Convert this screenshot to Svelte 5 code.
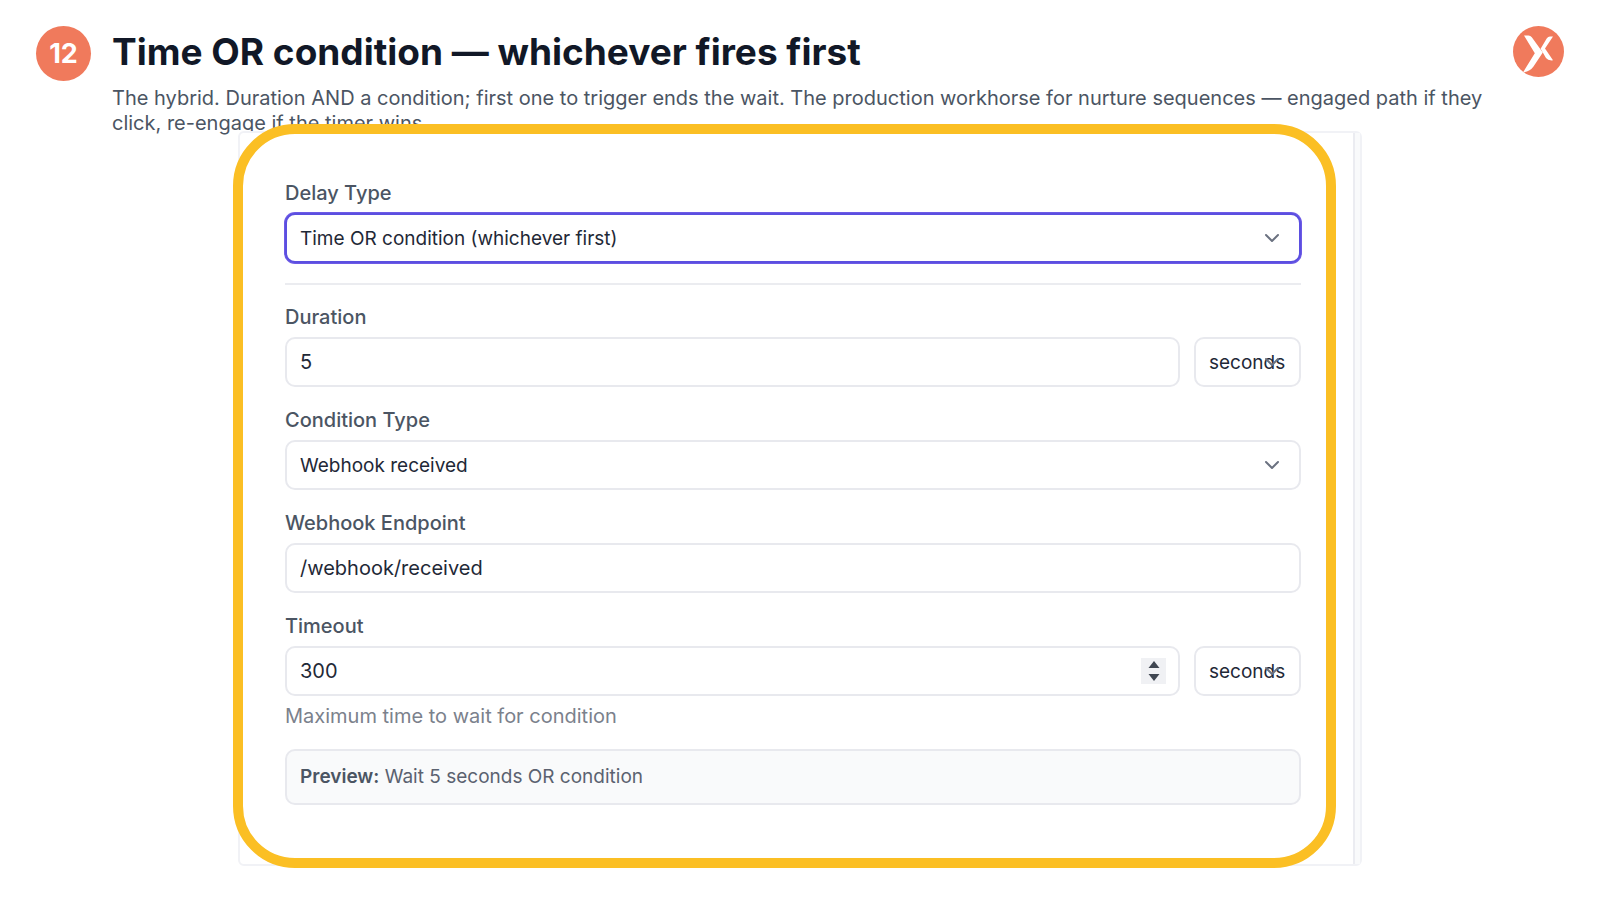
<script>
	let delayType = 'time-or-condition';
	let duration = 5;
	let durationUnit = 'seconds';
	let conditionType = 'webhook';
	let endpoint = '/webhook/received';
	let timeout = 300;
	let timeoutUnit = 'seconds';

	const delayTypes = [
		{ value: 'time-or-condition', label: 'Time OR condition (whichever first)' },
	];
	const conditionTypes = [
		{ value: 'webhook', label: 'Webhook received' },
	];
	const units = ['seconds', 'minutes', 'hours', 'days'];

	function stepTimeout(amount) {
		timeout = Math.max(0, timeout + amount);
	}
</script>

{#snippet chevron()}
	<svg class="chevron" viewBox="0 0 16 10" aria-hidden="true">
		<path d="M2 2l6 6 6-6" />
	</svg>
{/snippet}

<main>
	<header>
		<span class="badge">12</span>
		<div class="heading">
			<h1>Time OR condition — whichever fires first</h1>
			<p>
				The hybrid. Duration AND a condition; first one to trigger ends the wait. The production workhorse for nurture
				sequences — engaged path if they click, re-engage if the timer wins.
			</p>
		</div>
		<svg class="logo" viewBox="0 0 51 51" aria-hidden="true">
			<circle cx="25.5" cy="25.5" r="25.5" fill="#f07a5c" />
			<path d="M11 9.5H15.5Q17.5 9.5 18.8 11.3L29.8 26.5L20.5 40.5Q17 45.5 10 46.5L21.8 27.3Z" fill="#fff" />
			<path d="M40 10.5H37Q35 10.5 33.7 12.6L27.6 22.8L33 32Q35 34.8 40 34.3L32 22.6Z" fill="#fff" />
		</svg>
	</header>

	<section class="card">
		<form>
			<div class="field">
				<label for="delay-type">Delay Type</label>
				<div class="control">
					<select id="delay-type" class="active" bind:value={delayType}>
						{#each delayTypes as option}
							<option value={option.value}>{option.label}</option>
						{/each}
					</select>
					{@render chevron()}
				</div>
			</div>

			<hr />

			<div class="field">
				<label for="duration">Duration</label>
				<div class="row">
					<div class="control">
						<input id="duration" type="number" bind:value={duration} />
					</div>
					<div class="control unit">
						<select aria-label="Duration unit" bind:value={durationUnit}>
							{#each units as unit}
								<option value={unit}>{unit}</option>
							{/each}
						</select>
						{@render chevron()}
					</div>
				</div>
			</div>

			<div class="field">
				<label for="condition-type">Condition Type</label>
				<div class="control">
					<select id="condition-type" bind:value={conditionType}>
						{#each conditionTypes as option}
							<option value={option.value}>{option.label}</option>
						{/each}
					</select>
					{@render chevron()}
				</div>
			</div>

			<div class="field">
				<label for="endpoint">Webhook Endpoint</label>
				<div class="control">
					<input id="endpoint" type="text" bind:value={endpoint} />
				</div>
			</div>

			<div class="field">
				<label for="timeout">Timeout</label>
				<div class="row">
					<div class="control">
						<input id="timeout" type="number" bind:value={timeout} />
						<div class="spinner">
							<button type="button" tabindex="-1" aria-label="Increase timeout" on:click={() => stepTimeout(1)}>
								<svg viewBox="0 0 12 7"><path d="M6 0l5.5 7H.5z" /></svg>
							</button>
							<button type="button" tabindex="-1" aria-label="Decrease timeout" on:click={() => stepTimeout(-1)}>
								<svg viewBox="0 0 12 7"><path d="M6 7L.5 0h11z" /></svg>
							</button>
						</div>
					</div>
					<div class="control unit">
						<select aria-label="Timeout unit" bind:value={timeoutUnit}>
							{#each units as unit}
								<option value={unit}>{unit}</option>
							{/each}
						</select>
						{@render chevron()}
					</div>
				</div>
				<small>Maximum time to wait for condition</small>
			</div>

			<div class="preview"><strong>Preview:</strong> Wait {duration} {durationUnit} OR condition</div>
		</form>
		<div class="gutter"></div>
		<div class="highlight"></div>
	</section>
</main>

<style>
	:global(body) {
		background: #fff;
	}

	main {
		font-family: Inter, 'Liberation Sans', sans-serif;
		color: #374151;
		padding: 26px 36px;
	}

	header {
		display: flex;
		align-items: flex-start;
		gap: 21px;
	}

	.badge {
		display: flex;
		align-items: center;
		justify-content: center;
		flex: none;
		width: 55px;
		height: 55px;
		border-radius: 50%;
		background: #f07a5c;
		color: #fff;
		font-size: 27px;
		font-weight: 700;
	}

	.heading {
		flex: 1;
	}

	h1 {
		margin: 0;
		font-size: 37px;
		line-height: 52px;
		font-weight: 700;
		color: #111827;
	}

	p {
		margin: 8px 0 0;
		font-size: 20px;
		line-height: 25px;
		color: #4b5563;
	}

	.logo {
		flex: none;
		width: 51px;
		height: 51px;
	}

	.card {
		position: relative;
		display: flex;
		margin: -5px 202px 0;
		background: #fff;
		border: 2px solid #f1f2f6;
		border-radius: 6px;
	}

	form {
		flex: 1;
		display: flex;
		flex-direction: column;
		gap: 21px;
		padding: 48px 52px 59px 45px;
	}

	.gutter {
		width: 5px;
		border-left: 2px solid #ebecf1;
		background: #f9fafb;
	}

	.highlight {
		position: absolute;
		inset: -9px 24px -4px -7px;
		border: 10px solid #fbbf24;
		border-radius: 62px;
		pointer-events: none;
	}

	.field {
		display: flex;
		flex-direction: column;
		gap: 8px;
	}

	label {
		font-size: 20px;
		line-height: 24px;
		font-weight: 500;
		color: #4b5563;
	}

	.row {
		display: flex;
		gap: 14px;
	}

	.control {
		position: relative;
		flex: 1;
		display: flex;
	}

	.control.unit {
		flex: 0 0 107px;
	}

	input,
	select {
		box-sizing: border-box;
		width: 100%;
		height: 50px;
		margin: 0;
		padding: 0 13px;
		border: 2px solid #e8e9ee;
		border-radius: 10px;
		background: #fff;
		color: #1f2937;
		font-family: inherit;
		font-size: 20px;
		appearance: none;
		outline: none;
	}

	select {
		font-size: 19px;
	}

	.unit select {
		padding-right: 0;
	}

	input[type='number'] {
		appearance: textfield;
	}

	input:focus,
	select:focus,
	select.active {
		border-color: #5b4fe0;
		box-shadow: 0 0 0 1px #6d5ae6;
	}

	.chevron {
		position: absolute;
		top: 20px;
		right: 21px;
		width: 16px;
		height: 10px;
		fill: none;
		stroke: #6b7280;
		stroke-width: 2;
		stroke-linecap: round;
		stroke-linejoin: round;
		pointer-events: none;
	}

	.spinner {
		position: absolute;
		top: 12px;
		right: 14px;
		width: 25px;
		height: 26px;
		display: flex;
		flex-direction: column;
		background: #f0f1f4;
	}

	.spinner button {
		flex: 1;
		display: flex;
		align-items: center;
		justify-content: center;
		padding: 0;
		border: 0;
		background: none;
	}

	.spinner svg {
		width: 12px;
		height: 7px;
		fill: #3f4651;
	}

	hr {
		width: 100%;
		height: 2px;
		margin: -1px 0;
		border: 0;
		background: #ebecf0;
	}

	small {
		font-size: 20px;
		line-height: 24px;
		color: #7b818c;
	}

	.preview {
		padding: 14px 13px;
		border: 2px solid #e8e9ee;
		border-radius: 10px;
		background: #f9fafb;
		font-size: 19px;
		line-height: 24px;
		color: #5b6270;
	}

	.preview strong {
		font-weight: 600;
		color: #4b5563;
	}
</style>
